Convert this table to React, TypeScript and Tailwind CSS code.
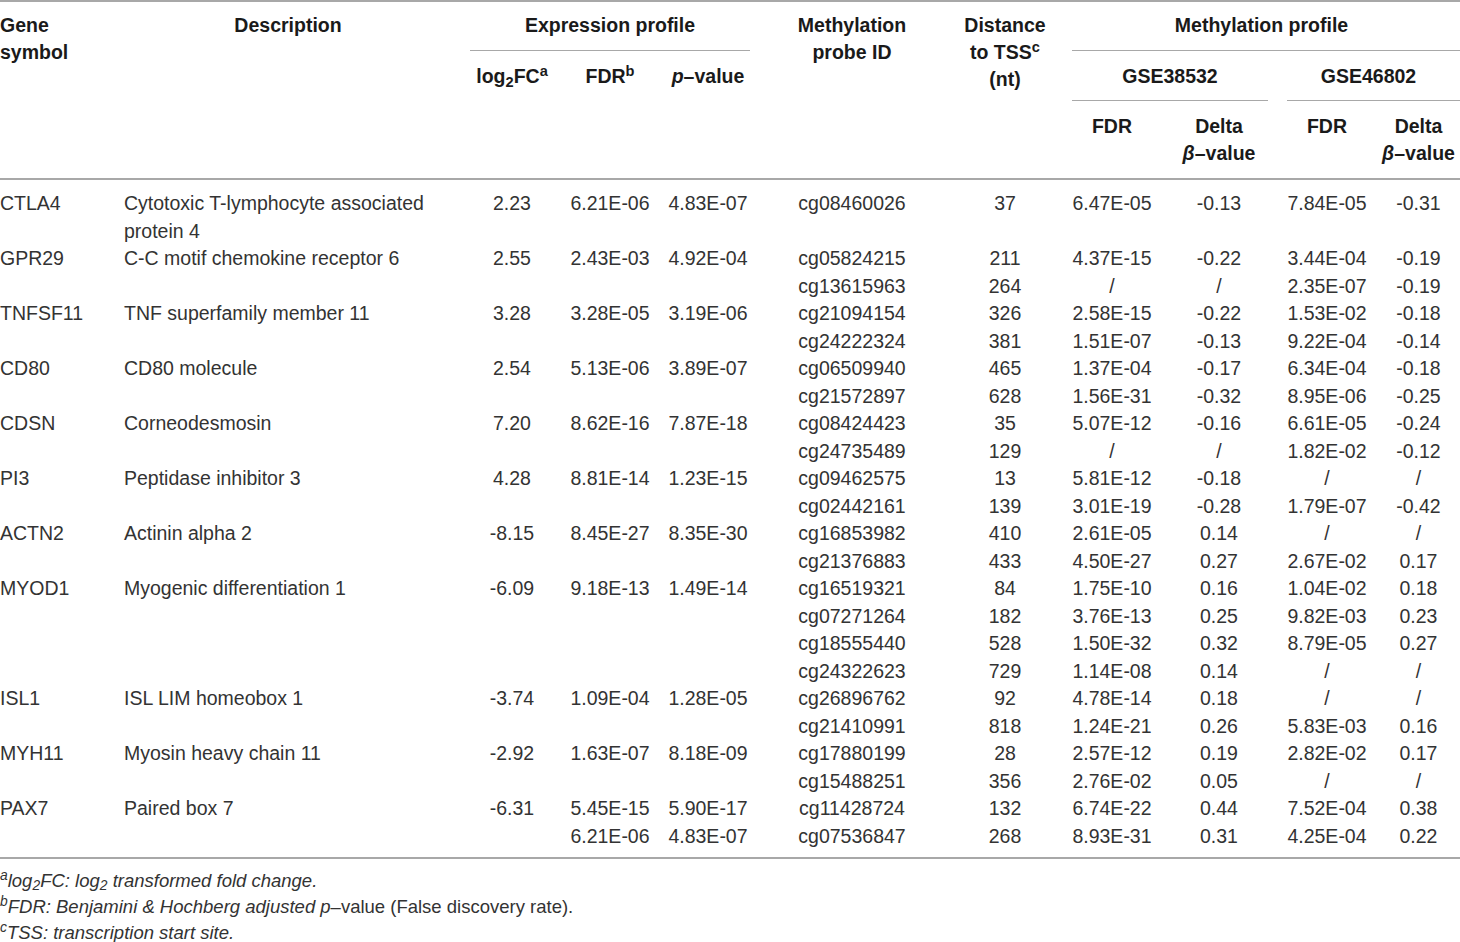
import React from "react";

type Row = {
  gene: string;
  desc: string;
  fc: string;
  fdr: string[];
  pval: string[];
  probes: string[];
  dist: string[];
  fdr1: string[];
  d1: string[];
  fdr2: string[];
  d2: string[];
};

const rows: Row[] = [
  { gene: "CTLA4", desc: "Cytotoxic T-lymphocyte associated protein 4", fc: "2.23", fdr: ["6.21E-06"], pval: ["4.83E-07"], probes: ["cg08460026"], dist: ["37"], fdr1: ["6.47E-05"], d1: ["-0.13"], fdr2: ["7.84E-05"], d2: ["-0.31"] },
  { gene: "GPR29", desc: "C-C motif chemokine receptor 6", fc: "2.55", fdr: ["2.43E-03"], pval: ["4.92E-04"], probes: ["cg05824215", "cg13615963"], dist: ["211", "264"], fdr1: ["4.37E-15", "/"], d1: ["-0.22", "/"], fdr2: ["3.44E-04", "2.35E-07"], d2: ["-0.19", "-0.19"] },
  { gene: "TNFSF11", desc: "TNF superfamily member 11", fc: "3.28", fdr: ["3.28E-05"], pval: ["3.19E-06"], probes: ["cg21094154", "cg24222324"], dist: ["326", "381"], fdr1: ["2.58E-15", "1.51E-07"], d1: ["-0.22", "-0.13"], fdr2: ["1.53E-02", "9.22E-04"], d2: ["-0.18", "-0.14"] },
  { gene: "CD80", desc: "CD80 molecule", fc: "2.54", fdr: ["5.13E-06"], pval: ["3.89E-07"], probes: ["cg06509940", "cg21572897"], dist: ["465", "628"], fdr1: ["1.37E-04", "1.56E-31"], d1: ["-0.17", "-0.32"], fdr2: ["6.34E-04", "8.95E-06"], d2: ["-0.18", "-0.25"] },
  { gene: "CDSN", desc: "Corneodesmosin", fc: "7.20", fdr: ["8.62E-16"], pval: ["7.87E-18"], probes: ["cg08424423", "cg24735489"], dist: ["35", "129"], fdr1: ["5.07E-12", "/"], d1: ["-0.16", "/"], fdr2: ["6.61E-05", "1.82E-02"], d2: ["-0.24", "-0.12"] },
  { gene: "PI3", desc: "Peptidase inhibitor 3", fc: "4.28", fdr: ["8.81E-14"], pval: ["1.23E-15"], probes: ["cg09462575", "cg02442161"], dist: ["13", "139"], fdr1: ["5.81E-12", "3.01E-19"], d1: ["-0.18", "-0.28"], fdr2: ["/", "1.79E-07"], d2: ["/", "-0.42"] },
  { gene: "ACTN2", desc: "Actinin alpha 2", fc: "-8.15", fdr: ["8.45E-27"], pval: ["8.35E-30"], probes: ["cg16853982", "cg21376883"], dist: ["410", "433"], fdr1: ["2.61E-05", "4.50E-27"], d1: ["0.14", "0.27"], fdr2: ["/", "2.67E-02"], d2: ["/", "0.17"] },
  { gene: "MYOD1", desc: "Myogenic differentiation 1", fc: "-6.09", fdr: ["9.18E-13"], pval: ["1.49E-14"], probes: ["cg16519321", "cg07271264", "cg18555440", "cg24322623"], dist: ["84", "182", "528", "729"], fdr1: ["1.75E-10", "3.76E-13", "1.50E-32", "1.14E-08"], d1: ["0.16", "0.25", "0.32", "0.14"], fdr2: ["1.04E-02", "9.82E-03", "8.79E-05", "/"], d2: ["0.18", "0.23", "0.27", "/"] },
  { gene: "ISL1", desc: "ISL LIM homeobox 1", fc: "-3.74", fdr: ["1.09E-04"], pval: ["1.28E-05"], probes: ["cg26896762", "cg21410991"], dist: ["92", "818"], fdr1: ["4.78E-14", "1.24E-21"], d1: ["0.18", "0.26"], fdr2: ["/", "5.83E-03"], d2: ["/", "0.16"] },
  { gene: "MYH11", desc: "Myosin heavy chain 11", fc: "-2.92", fdr: ["1.63E-07"], pval: ["8.18E-09"], probes: ["cg17880199", "cg15488251"], dist: ["28", "356"], fdr1: ["2.57E-12", "2.76E-02"], d1: ["0.19", "0.05"], fdr2: ["2.82E-02", "/"], d2: ["0.17", "/"] },
  { gene: "PAX7", desc: "Paired box 7", fc: "-6.31", fdr: ["5.45E-15", "6.21E-06"], pval: ["5.90E-17", "4.83E-07"], probes: ["cg11428724", "cg07536847"], dist: ["132", "268"], fdr1: ["6.74E-22", "8.93E-31"], d1: ["0.44", "0.31"], fdr2: ["7.52E-04", "4.25E-04"], d2: ["0.38", "0.22"] },
];

const cols = "grid grid-cols-[118px_345px_98px_98px_98px_190px_116px_98px_116px_100px_83px]";

const Lines = ({ items }: { items: string[] }) => (
  <div className="text-center">
    {items.map((v, i) => (
      <div key={i}>{v}</div>
    ))}
  </div>
);

const GeneRow = ({ r }: { r: Row }) => (
  <div className={cols}>
    <div>{r.gene}</div>
    <div className="pl-[6px] pr-[10px]">{r.desc}</div>
    <div className="text-center">{r.fc}</div>
    <Lines items={r.fdr} />
    <Lines items={r.pval} />
    <Lines items={r.probes} />
    <Lines items={r.dist} />
    <Lines items={r.fdr1} />
    <Lines items={r.d1} />
    <Lines items={r.fdr2} />
    <Lines items={r.d2} />
  </div>
);

export default function App() {
  return (
    <div className="w-[1460px] h-[942px] overflow-hidden bg-white font-['Liberation_Sans',Arial,sans-serif]">
      <div
        className={`${cols} grid-rows-[49px_50px_77px] border-t-2 border-b-2 border-[#a8a8a8] text-[19.5px] leading-[27px] font-bold text-[#1a1a1a]`}
      >
        <div className="col-start-1 row-start-1 row-span-3 pt-[10px]">
          Gene
          <br />
          symbol
        </div>
        <div className="col-start-2 row-start-1 row-span-3 pt-[10px] pl-[6px] pr-[11px] text-center">Description</div>
        <div className="col-start-3 col-span-3 row-start-1 flex flex-col pt-[10px]">
          <div className="text-center">Expression profile</div>
          <div className="mt-auto mx-[7px] border-b border-[#a8a8a8]" />
        </div>
        <div className="col-start-6 row-start-1 row-span-3 pt-[10px] text-center">
          Methylation
          <br />
          probe ID
        </div>
        <div className="col-start-7 row-start-1 row-span-3 pt-[10px] text-center">
          Distance
          <br />
          to TSS<sup>c</sup>
          <br />
          (nt)
        </div>
        <div className="col-start-8 col-span-4 row-start-1 flex flex-col pt-[10px]">
          <div className="text-center">Methylation profile</div>
          <div className="mt-auto ml-[9px] border-b border-[#a8a8a8]" />
        </div>
        <div className="col-start-3 row-start-2 row-span-2 pt-[12px] text-center">
          log<sub>2</sub>FC<sup>a</sup>
        </div>
        <div className="col-start-4 row-start-2 row-span-2 pt-[12px] text-center">
          FDR<sup>b</sup>
        </div>
        <div className="col-start-5 row-start-2 row-span-2 pt-[12px] text-center">
          <i>p</i>–value
        </div>
        <div className="col-start-8 col-span-2 row-start-2 flex flex-col pt-[12px]">
          <div className="text-center">GSE38532</div>
          <div className="mt-auto mx-[9px] border-b border-[#a8a8a8]" />
        </div>
        <div className="col-start-10 col-span-2 row-start-2 flex flex-col pt-[12px]">
          <div className="text-center">GSE46802</div>
          <div className="mt-auto ml-[10px] border-b border-[#a8a8a8]" />
        </div>
        <div className="col-start-8 row-start-3 pt-[12px] text-center">FDR</div>
        <div className="col-start-9 row-start-3 pt-[12px] text-center">
          Delta
          <br />
          <i>β</i>–value
        </div>
        <div className="col-start-10 row-start-3 pt-[12px] text-center">FDR</div>
        <div className="col-start-11 row-start-3 pt-[12px] text-center">
          Delta
          <br />
          <i>β</i>–value
        </div>
      </div>

      <div className="pt-[10px] pb-[7px] border-b-2 border-[#a8a8a8] text-[19.5px] leading-[27.5px] text-[#333]">
        {rows.map((r) => (
          <GeneRow key={r.gene} r={r} />
        ))}
      </div>

      <div className="pt-[9px] text-[18.5px] leading-[26px] text-[#333]">
        <div className="italic">
          <sup>a</sup>log<sub>2</sub>FC: log<sub>2</sub> transformed fold change.
        </div>
        <div>
          <span className="italic">
            <sup>b</sup>FDR: Benjamini &amp; Hochberg adjusted p
          </span>
          –value (False discovery rate).
        </div>
        <div className="italic">
          <sup>c</sup>TSS: transcription start site.
        </div>
      </div>
    </div>
  );
}
